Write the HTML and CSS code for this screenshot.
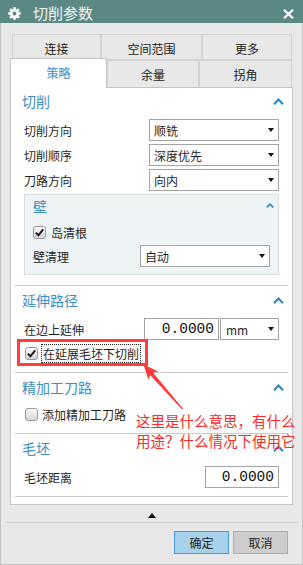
FILE: index.html
```html
<!DOCTYPE html>
<html lang="zh">
<head>
<meta charset="utf-8">
<title>切削参数</title>
<link rel="stylesheet" href="styles.css">
</head>
<body>
<div class="titlebar">
  <svg class="gear" viewBox="0 0 14 14" width="13" height="13">
    <g fill="#ffffff">
      <circle cx="7" cy="7" r="4.9"/>
      <rect x="5.6" y="0.3" width="2.8" height="13.4"/>
      <rect x="0.3" y="5.6" width="13.4" height="2.8"/>
      <rect x="5.6" y="0.3" width="2.8" height="13.4" transform="rotate(45 7 7)"/>
      <rect x="5.6" y="0.3" width="2.8" height="13.4" transform="rotate(-45 7 7)"/>
    </g>
    <circle cx="7" cy="7" r="2.1" fill="#5a8985"/>
  </svg>
  <span class="title">切削参数</span>
  <svg class="close" viewBox="0 0 11 10" width="11" height="10">
    <path d="M1 0.8 L10 9.2 M10 0.8 L1 9.2" stroke="#ffffff" stroke-width="2.2" fill="none"/>
  </svg>
</div>
<div class="window">
  <div class="tabs">
    <div class="tabrow r1">
      <div class="tab t-a">连接</div>
      <div class="tab t-b">空间范围</div>
      <div class="tab t-c">更多</div>
    </div>
    <div class="tabrow r2">
      <div class="tab active t-d">策略</div>
      <div class="tab t-e">余量</div>
      <div class="tab t-f">拐角</div>
    </div>
  </div>
  <div class="panel">
    <div class="sec s1">
      <div class="sec-head"><span>切削</span><svg class="chev" viewBox="0 0 11 7" width="11" height="7"><polyline points="1,6.2 5.5,1.5 10,6.2"/></svg></div>
      <div class="row first"><span class="label">切削方向</span><div class="select"><span>顺铣</span><i class="caret"></i></div></div>
      <div class="row"><span class="label">切削顺序</span><div class="select"><span>深度优先</span><i class="caret"></i></div></div>
      <div class="row"><span class="label">刀路方向</span><div class="select"><span>向内</span><i class="caret"></i></div></div>
      <div class="group">
        <div class="group-head"><span>壁</span><svg class="chev-s" viewBox="0 0 8 5" width="8" height="5"><polyline points="0.8,4.4 4,1.2 7.2,4.4"/></svg></div>
        <div class="check-row g-check"><span class="cb checked"><svg viewBox="0 0 13 13" width="13" height="13"><path d="M2.8 6.6 L5.4 9.3 L10.2 3.4"/></svg></span><span class="cb-text">岛清根</span></div>
        <div class="row g-row"><span class="label">壁清理</span><div class="select"><span>自动</span><i class="caret"></i></div></div>
      </div>
    </div>
    <div class="sep"></div>
    <div class="sec s2">
      <div class="sec-head"><span>延伸路径</span><svg class="chev" viewBox="0 0 11 7" width="11" height="7"><polyline points="1,6.2 5.5,1.5 10,6.2"/></svg></div>
      <div class="row first"><span class="label">在边上延伸</span><div class="input w75">0.0000</div><div class="select unit"><span>mm</span><i class="caret"></i></div></div>
      <div class="check-row first"><span class="cb checked"><svg viewBox="0 0 13 13" width="13" height="13"><path d="M2.8 6.6 L5.4 9.3 L10.2 3.4"/></svg></span><span class="cb-text focus">在延展毛坯下切削</span></div>
    </div>
    <div class="sep"></div>
    <div class="sec s3">
      <div class="sec-head"><span>精加工刀路</span><svg class="chev" viewBox="0 0 11 7" width="11" height="7"><polyline points="1,6.2 5.5,1.5 10,6.2"/></svg></div>
      <div class="check-row first"><span class="cb"></span><span class="cb-text">添加精加工刀路</span></div>
    </div>
    <div class="sep"></div>
    <div class="sec s4">
      <div class="sec-head"><span>毛坯</span><svg class="chev" viewBox="0 0 11 7" width="11" height="7"><polyline points="1,6.2 5.5,1.5 10,6.2"/></svg></div>
      <div class="row first"><span class="label">毛坯距离</span><div class="input w74">0.0000</div></div>
    </div>
    <div class="sep"></div>
  </div>
  <div class="expander"><i class="up"></i></div>
  <div class="hr"></div>
  <div class="buttons">
    <button class="btn ok">确定</button>
    <button class="btn cancel">取消</button>
  </div>
</div>

<div class="redbox"></div>
<svg class="arrow" viewBox="0 0 303 565" width="303" height="565">
  <polygon points="143.5,364.5 158.3,371.5 152.9,372.6 182.9,408.6 182.1,409.4 150,375 148.5,380.1" fill="#ff3b3b"/>
</svg>
<div class="note">这里是什么意思，有什么<br>用途？什么情况下使用它</div>
</body>
</html>
```
FILE: styles.css
```css
* { box-sizing: border-box; }
html, body { margin: 0; padding: 0; }
body {
  width: 303px;
  height: 565px;
  background: #e8e8e8;
  font-family: "Noto Sans CJK SC", "Noto Sans", sans-serif;
  font-size: 12px;
  color: #1f1f1f;
  position: relative;
  overflow: hidden;
}

/* title bar */
.titlebar {
  height: 23px;
  background: #5a8985;
  display: flex;
  align-items: flex-start;
  padding: 0 9px 0 8px;
}
.gear { margin-top: 7px; flex: none; }
.title {
  margin-left: 12px;
  flex: 1;
  color: #f3f8f7;
  font-size: 15px;
  line-height: 23px;
  padding-top: 1px;
}
.close { margin-top: 9px; flex: none; }

/* window frame */
.window {
  height: 542px;
  border: 1px solid #c3c3c3;
  border-top: none;
  display: flex;
  flex-direction: column;
}

/* tabs */
.tabs { margin: 11px 9px 0 9px; }
.tabrow { display: flex; padding: 0 1px 0 2px; }
.tab {
  border: 1px solid #d3d3d3;
  display: flex;
  align-items: center;
  justify-content: center;
  color: #222;
  flex: none;
}
.r1 { height: 26px; }
.r1 .tab { height: 26px; padding-top: 3px; }
.r2 { height: 27px; align-items: flex-end; }
.r2 .tab { height: 27px; border-bottom: none; }
.t-a { width: 89px; }
.t-b { width: 101px; }
.t-c { width: 90px; }
.t-d { width: 97px; }
.t-e { width: 92px; }
.t-f { width: 93px; }
.r2 .tab.active {
  height: 30px;
  margin: 0 0 -1px -2px;
  background: #ffffff;
  border-color: #c4c4c4;
  color: #3a8ec8;
  position: relative;
  z-index: 1;
  padding-bottom: 2px;
}

/* panel */
.panel {
  margin: 0 9px;
  height: 418px;
  background: #ffffff;
  border: 1px solid #c4c4c4;
}
.sec { padding: 0 13px; }
.sec-head {
  height: 28px;
  margin: 0 -13px;
  padding: 0 8px 0 11px;
  display: flex;
  align-items: center;
  justify-content: space-between;
  color: #3a8ec8;
  font-size: 14px;
}
.s1 .sec-head { height: 26px; }
.chev polyline, .chev-s polyline {
  fill: none;
  stroke: #2f87c2;
  stroke-width: 2.1;
}
.chev-s polyline { stroke-width: 1.6; }

.row {
  display: flex;
  align-items: center;
  height: 22px;
  margin-top: 3px;
}
.row.first { margin-top: 5px; }
.s2 .row.first, .s4 .row.first { margin-top: 4px; }
.label { flex: 1; color: #1f1f1f; }

.select {
  width: 130px;
  height: 22px;
  border: 1px solid #a4a4a4;
  background: #ffffff;
  display: flex;
  align-items: center;
  justify-content: space-between;
  padding: 0 4px 0 4px;
  flex: none;
}
.select.unit { width: 59px; margin-left: 1px; padding-left: 5px; }
.caret {
  width: 0;
  height: 0;
  border-left: 3.5px solid transparent;
  border-right: 3.5px solid transparent;
  border-top: 4px solid #111;
}
.input {
  height: 22px;
  border: 1px solid #a4a4a4;
  background: #ffffff;
  font-family: "Liberation Mono", monospace;
  font-size: 14.5px;
  line-height: 20px;
  text-align: right;
  padding-right: 4px;
  color: #111;
  flex: none;
}
.w75 { width: 75px; }
.w74 { width: 74px; }

/* group */
.group {
  margin: 3px 0 10px 0;
  background: #eef4f5;
  border: 1px solid #d6dddd;
  padding: 0 8px 7px 8px;
}
.group-head {
  height: 21px;
  margin-right: -4px;
  display: flex;
  align-items: center;
  justify-content: space-between;
  color: #3a8ec8;
  font-size: 14px;
}
.g-check { margin-top: 7px; }
.g-row { margin-top: 3px; }

/* checkboxes */
.check-row {
  display: flex;
  align-items: center;
  height: 19px;
}
.s2 .check-row.first, .s3 .check-row.first { margin-top: 4px; padding-left: 1px; }
.cb {
  width: 13px;
  height: 13px;
  border: 1px solid #9a9a9a;
  border-radius: 3px;
  background: linear-gradient(#fbfbfb, #d4d4d4);
  flex: none;
  position: relative;
}
.cb svg { position: absolute; left: -1px; top: -1px; }
.cb svg path { fill: none; stroke: #1a1a1a; stroke-width: 2; }
.cb-text { margin-left: 4px; line-height: 17px; }
.g-check .cb-text { margin-left: 5px; }
.cb-text.focus {
  margin-left: 3px;
  border: 1px dotted #222;
  padding: 0 1px;
  height: 19px;
}
.s2 { padding-bottom: 9px; }
.s3 { padding-bottom: 9px; }
.s4 { padding-bottom: 8px; }

.sep {
  height: 1px;
  background: #cbcbcb;
  margin: 0 4px;
}

/* bottom */
.expander {
  height: 17px;
  padding-top: 8px;
  display: flex;
  justify-content: center;
}
.up {
  width: 0;
  height: 0;
  border-left: 4.5px solid transparent;
  border-right: 4.5px solid transparent;
  border-bottom: 5px solid #111;
}
.hr {
  height: 1px;
  background: #d0d0d0;
  margin: 0 4px 0 5px;
}
.buttons {
  display: flex;
  justify-content: flex-end;
  gap: 4px;
  margin-top: 8px;
  padding-right: 14px;
}
.btn {
  width: 55px;
  height: 23px;
  font-family: "Noto Sans CJK SC", sans-serif;
  font-size: 12px;
  color: #1f1f1f;
  padding: 0;
  margin: 0;
}
.btn.ok { background: #a7d0ea; border: 1px solid #4a9bd3; }
.btn.cancel { background: #cdcdcd; border: 1px solid #adadad; }

/* annotation overlays */
.redbox {
  position: absolute;
  left: 17px;
  top: 339px;
  width: 131px;
  height: 27px;
  border: 3px solid #ff3b3b;
}
.arrow {
  position: absolute;
  left: 0;
  top: 0;
  pointer-events: none;
}
.note {
  position: absolute;
  left: 136px;
  top: 411px;
  font-size: 14.5px;
  line-height: 20px;
  color: #ff2a2a;
  white-space: nowrap;
}
```
